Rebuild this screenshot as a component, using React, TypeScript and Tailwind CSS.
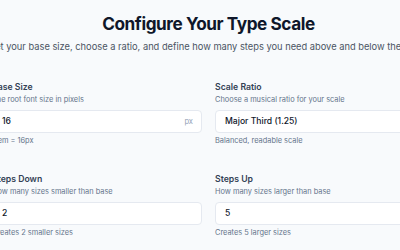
import React from "react";

function Field({
  label,
  desc,
  helper,
  children,
}: {
  label: string;
  desc: string;
  helper: string;
  children: React.ReactNode;
}) {
  return (
    <div className="flex flex-col">
      <div className="text-[8.7px] leading-[12px] font-semibold text-[#334155]">{label}</div>
      <div className="mt-[1px] text-[7.4px] leading-[12px] text-[#64748b]">{desc}</div>
      <div className="mt-[4px]">{children}</div>
      <div className="mt-[2px] text-[7.4px] leading-[12px] text-[#64748b]">{helper}</div>
    </div>
  );
}

function Box({ value, suffix, chevron }: { value: string; suffix?: string; chevron?: boolean }) {
  return (
    <div className="flex h-[23px] items-center justify-between rounded-[4px] border border-[#e5e9f0] bg-white pl-[9px] pr-[8px]">
      <span className="text-[8.6px] font-medium text-[#0f172a]">{value}</span>
      {suffix && <span className="text-[7.6px] text-[#94a3b8]">{suffix}</span>}
      {chevron && (
        <svg width="9" height="9" viewBox="0 0 24 24" fill="none" stroke="#64748b" strokeWidth="2">
          <path d="M6 9l6 6 6-6" />
        </svg>
      )}
    </div>
  );
}

export default function App() {
  return (
    <div
      className="h-[250px] w-[400px] overflow-hidden bg-[#f8fafc]"
      style={{ fontFamily: "Inter, 'Noto Sans', sans-serif" }}
    >
      <div className="ml-[-8px] w-[433px] pt-[12px]">
        <div className="flex justify-center">
          <h1 className="whitespace-nowrap text-[17.2px] leading-[24px] font-bold tracking-tight text-[#0f172a]">
            Configure Your Type Scale
          </h1>
        </div>
        <div className="mt-[4px] flex justify-center">
          <p className="whitespace-nowrap text-[9.3px] leading-[14px] text-[#4b5563]">
            Set your base size, choose a ratio, and define how many steps you need above and below the base.
          </p>
        </div>
        <div className="mt-[27px] grid grid-cols-2 gap-x-[13px] gap-y-[26px]">
          <Field label="Base Size" desc="The root font size in pixels" helper="1rem = 16px">
            <Box value="16" suffix="px" />
          </Field>
          <Field label="Scale Ratio" desc="Choose a musical ratio for your scale" helper="Balanced, readable scale">
            <Box value="Major Third (1.25)" chevron />
          </Field>
          <Field label="Steps Down" desc="How many sizes smaller than base" helper="Creates 2 smaller sizes">
            <Box value="2" />
          </Field>
          <Field label="Steps Up" desc="How many sizes larger than base" helper="Creates 5 larger sizes">
            <Box value="5" />
          </Field>
        </div>
      </div>
    </div>
  );
}
